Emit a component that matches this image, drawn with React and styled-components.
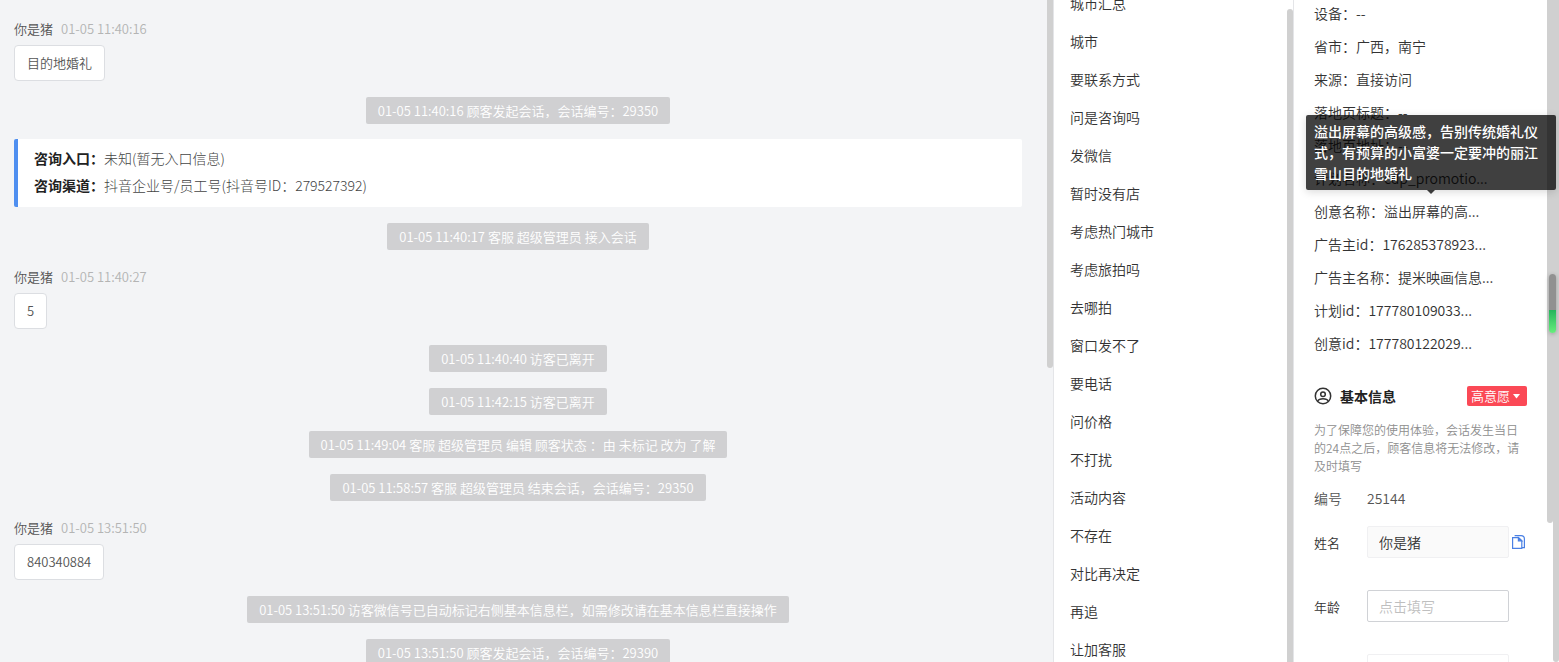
import React from 'react';
import styled, {createGlobalStyle} from 'styled-components';

const GlobalStyle = createGlobalStyle`
* {
    box-sizing: border-box;
}

body {
    margin: 0;
    background: #fff;
    color: #333;
    font-family: 'Noto Sans CJK SC', 'Noto Sans', sans-serif;
    font-size: 14px;
    font-weight: 350;
}
`;

const Page = styled('div')`
display: flex;
height: 100vh;
overflow: hidden;
`;

const ChatPanel = styled('main')`
position: relative;
flex: 1;
min-width: 0;
overflow: hidden;
padding: 18px 31px 0 14px;
background: #f3f4f6;
font-size: 13px;
display: flex;
flex-direction: column;
gap: 16px;
`;

const Message = styled('article')`
flex: none;
display: flex;
flex-direction: column;
align-items: flex-start;
gap: 5px;
`;

const MessageHead = styled('div')`
display: flex;
gap: 8px;
line-height: 22px;
color: #555;
`;

const MessageTime = styled('time')`
color: #b4b4b4;
`;

const Bubble = styled('p')`
margin: 0;
padding: 0 12px;
line-height: 34px;
color: #555;
background: #fff;
border: 1px solid #dcdee2;
border-radius: 4px;
`;

const Notice = styled('p')`
flex: none;
align-self: center;
margin: 0;
padding: 0 12px;
line-height: 27px;
white-space: nowrap;
color: #fff;
background: #d0d0d2;
border-radius: 2px;
`;

const EntryCard = styled('section')`
flex: none;
margin-top: -1px;
padding: 6px 16px 8px;
background: #fff;
border-left: 4px solid #4f8ff0;
border-radius: 2px;
font-size: 14px;
font-weight: 300;
line-height: 27px;
color: #444;

strong {
    font-weight: 700;
    color: #222;
}
`;

const TopicPanel = styled('nav')`
position: relative;
flex: none;
width: 241px;
overflow: hidden;
background: #fff;
border-left: 1px solid #e4e5e8;
border-right: 1px solid #e4e5e8;
`;

const TopicList = styled('ul')`
margin: -16px 0 0;
padding: 0;
list-style: none;
`;

const TopicLink = styled('a')`
display: block;
padding: 0 16px;
line-height: 38px;
color: #333;
text-decoration: none;
`;

const InfoPanel = styled('aside')`
position: relative;
flex: none;
width: 265px;
overflow: hidden;
padding: 0 32px 0 20px;
background: #fff;
`;

const DetailList = styled('ul')`
margin: -3px 0 0;
padding: 0;
list-style: none;
`;

const DetailRow = styled('li')`
position: relative;
line-height: 33px;
white-space: nowrap;
`;

const Tooltip = styled('div')`
position: absolute;
z-index: 3;
left: -8px;
bottom: calc(100% + 5px);
width: 250px;
padding: 6px 8px;
line-height: 21px;
font-weight: 500;
white-space: normal;
color: #fff;
background: rgba(0, 0, 0, 0.75);
border-radius: 2px;
box-shadow: 0 2px 8px rgba(0, 0, 0, 0.15);

&::after {
    content: '';
    position: absolute;
    top: 100%;
    left: 50%;
    margin-left: -4px;
    border: 4px solid transparent;
    border-top-color: rgba(0, 0, 0, 0.75);
    border-bottom: 0;
}
`;

const SectionHead = styled('header')`
display: flex;
align-items: center;
gap: 8px;
margin-top: 24px;
height: 24px;
`;

const SectionTitle = styled('h2')`
flex: 1;
margin: 0;
font-size: 14px;
font-weight: 700;
line-height: 22px;
color: #222;
`;

const IntentButton = styled('button')`
display: flex;
align-items: center;
gap: 3px;
height: 20px;
padding: 0 7px 0 4px;
border: 0;
border-radius: 2px;
font: inherit;
font-size: 13px;
line-height: 20px;
color: #fff;
background: #fb4956;
`;

const Hint = styled('p')`
margin: 13px 0 0;
font-size: 12px;
line-height: 18px;
color: #8e8e8e;
`;

const NumberRow = styled('div')`
display: flex;
margin-top: 12px;
line-height: 22px;
color: #555;
`;

const NumberLabel = styled('span')`
width: 53px;
`;

const Form = styled('form')`
display: flex;
flex-direction: column;
gap: 32px;
margin-top: 17px;
`;

const Field = styled('div')`
display: grid;
grid-template-columns: 53px 142px auto;
align-items: center;
justify-content: start;
height: 32px;
`;

const FieldLabel = styled('label')`
font-size: 13px;
`;

const FieldInput = styled('input')`
grid-column: 2;
width: 100%;
height: 32px;
padding: 0 11px;
border: 1px solid ${props => props.$quiet ? '#f0f0f2' : '#d0d2d6'};
border-radius: 2px;
font: inherit;
color: #333;
background: ${props => props.$filled ? '#fafafa' : '#fff'};

&::placeholder {
    color: #bfbfbf;
    opacity: 1;
}
`;

const CopyButton = styled('button')`
display: flex;
margin-left: 2px;
padding: 0;
border: 0;
background: none;
`;

const ScrollThumb = styled('div')`
position: absolute;
z-index: 1;
top: ${props => props.$top || '0'};
bottom: ${props => props.$bottom || '0'};
right: ${props => props.$right || '0'};
width: 6px;
background: #d0d0d0;
border-radius: ${props => props.$top ? '3px 3px 0 0' : '0 0 3px 3px'};
`;

const LevelBar = styled('div')`
position: absolute;
z-index: 2;
top: 274px;
right: 3px;
width: 7px;
height: 59px;
border-radius: 4px;
background: linear-gradient(#919191 36px, #25b45c 36px, #66ee7c);
box-shadow: 0 1px 4px rgba(0, 0, 0, 0.25);
`;

const chat = [
    {type: 'message', name: '你是猪', time: '01-05 11:40:16', text: '目的地婚礼'},
    {type: 'notice', text: '01-05 11:40:16 顾客发起会话，会话编号：29350'},
    {type: 'entry'},
    {type: 'notice', text: '01-05 11:40:17 客服 超级管理员 接入会话'},
    {type: 'message', name: '你是猪', time: '01-05 11:40:27', text: '5'},
    {type: 'notice', text: '01-05 11:40:40 访客已离开'},
    {type: 'notice', text: '01-05 11:42:15 访客已离开'},
    {type: 'notice', text: '01-05 11:49:04 客服 超级管理员 编辑 顾客状态 ：由 未标记 改为 了解'},
    {type: 'notice', text: '01-05 11:58:57 客服 超级管理员 结束会话，会话编号：29350'},
    {type: 'message', name: '你是猪', time: '01-05 13:51:50', text: '840340884'},
    {type: 'notice', text: '01-05 13:51:50 访客微信号已自动标记右侧基本信息栏，如需修改请在基本信息栏直接操作'},
    {type: 'notice', text: '01-05 13:51:50 顾客发起会话，会话编号：29390'},
];

const topics = [
    '城市汇总', '城市', '要联系方式', '问是咨询吗', '发微信', '暂时没有店',
    '考虑热门城市', '考虑旅拍吗', '去哪拍', '窗口发不了', '要电话', '问价格',
    '不打扰', '活动内容', '不存在', '对比再决定', '再追', '让加客服',
];

const details = [
    {label: '设备', value: '--'},
    {label: '省市', value: '广西，南宁'},
    {label: '来源', value: '直接访问'},
    {label: '落地页标题', value: '--'},
    {label: '落地页地址', value: '--'},
    {label: '计划名称', value: 'cdp_promotio...'},
    {label: '创意名称', value: '溢出屏幕的高...', tip: '溢出屏幕的高级感，告别传统婚礼仪式，有预算的小富婆一定要冲的丽江雪山目的地婚礼'},
    {label: '广告主id', value: '176285378923...'},
    {label: '广告主名称', value: '提米映画信息...'},
    {label: '计划id', value: '177780109033...'},
    {label: '创意id', value: '177780122029...'},
];

const UserIcon = () => (
    <svg width="18" height="18" viewBox="0 0 18 18" fill="none" stroke="#333" strokeWidth="1.5">
        <circle cx="9" cy="9" r="7.7"/>
        <circle cx="9" cy="7.2" r="2.3"/>
        <path d="M3.8 14.2C4.6 12.4 6.4 11.8 9 11.8s4.4.6 5.2 2.4"/>
    </svg>
);

const CopyIcon = () => (
    <svg width="15" height="16" viewBox="0 0 15 16" fill="none" stroke="#4a80e4" strokeWidth="1.2">
        <path d="M1.6 3.6h5.8l3.4 3.2v7.6H1.600z"/>
        <path d="M3.600 1.600h6.400c2 0 3.400 1.400 3.400 3.400v8.600h-2.600"/>
        <path d="M7.400 3.600v3.200h3.400z" fill="#4a80e4"/>
    </svg>
);

const ChatItem = ({item}) => {
    if (item.type === 'message') {
        return (
            <Message>
                <MessageHead>
                    <span>{item.name}</span>
                    <MessageTime>{item.time}</MessageTime>
                </MessageHead>
                <Bubble>{item.text}</Bubble>
            </Message>
        );
    }
    if (item.type === 'entry') {
        return (
            <EntryCard>
                <div><strong>咨询入口：</strong>未知(暂无入口信息)</div>
                <div><strong>咨询渠道：</strong>抖音企业号/员工号(抖音号ID：279527392)</div>
            </EntryCard>
        );
    }
    return <Notice>{item.text}</Notice>;
};

const App = () => {
    return (
        <>
            <GlobalStyle/>
            <Page>
                <ChatPanel>
                    {chat.map((item, i) => <ChatItem key={i} item={item}/>)}
                    <ScrollThumb $bottom="calc(100% - 368px)"/>
                </ChatPanel>
                <TopicPanel>
                    <TopicList>
                        {topics.map(topic => (
                            <li key={topic}><TopicLink href="#">{topic}</TopicLink></li>
                        ))}
                    </TopicList>
                    <ScrollThumb $top="9px"/>
                </TopicPanel>
                <InfoPanel>
                    <DetailList>
                        {details.map(row => (
                            <DetailRow key={row.label}>
                                {row.label}：{row.value}
                                {row.tip && <Tooltip role="tooltip">{row.tip}</Tooltip>}
                            </DetailRow>
                        ))}
                    </DetailList>
                    <SectionHead>
                        <UserIcon/>
                        <SectionTitle>基本信息</SectionTitle>
                        <IntentButton type="button">
                            高意愿
                            <svg width="7" height="5" viewBox="0 0 7 5" fill="#fff"><path d="M0 0h7L3.5 4.5z"/></svg>
                        </IntentButton>
                    </SectionHead>
                    <Hint>为了保障您的使用体验，会话发生当日的24点之后，顾客信息将无法修改，请及时填写</Hint>
                    <NumberRow>
                        <NumberLabel>编号</NumberLabel>
                        <span>25144</span>
                    </NumberRow>
                    <Form>
                        <Field>
                            <FieldLabel htmlFor="name">姓名</FieldLabel>
                            <FieldInput id="name" defaultValue="你是猪" $quiet $filled/>
                            <CopyButton type="button" aria-label="复制"><CopyIcon/></CopyButton>
                        </Field>
                        <Field>
                            <FieldLabel htmlFor="age">年龄</FieldLabel>
                            <FieldInput id="age" placeholder="点击填写"/>
                        </Field>
                        <Field>
                            <FieldInput aria-label="电话" $quiet/>
                        </Field>
                    </Form>
                    <ScrollThumb $right="6px" $bottom="calc(100% - 523px)"/>
                    <ScrollThumb/>
                    <LevelBar/>
                </InfoPanel>
            </Page>
        </>
    );
};

export default App;
